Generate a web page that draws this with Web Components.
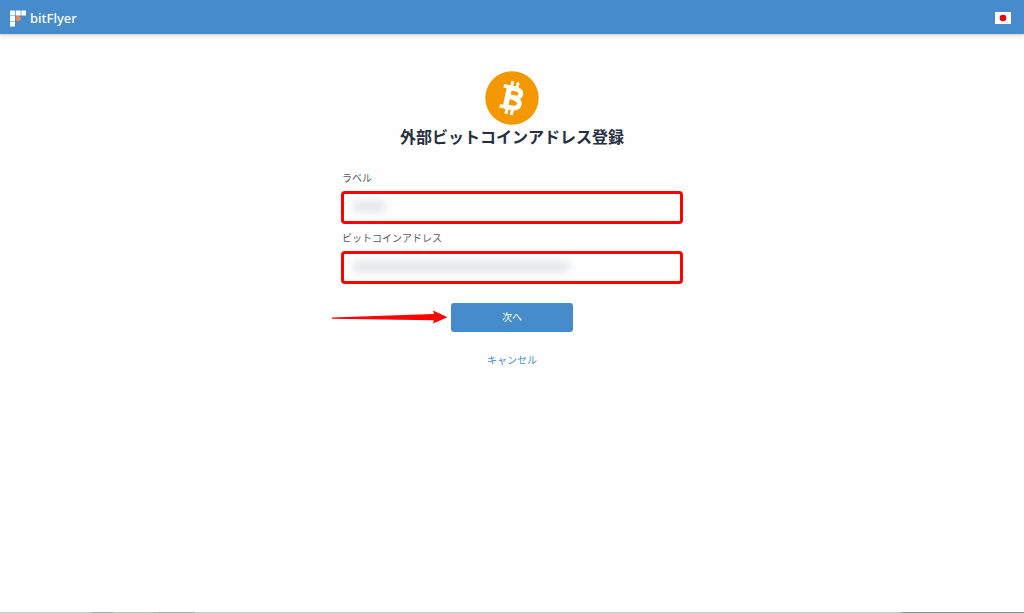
<!DOCTYPE html>
<html lang="ja">
<head>
<meta charset="utf-8">
<meta name="viewport" content="width=device-width, initial-scale=1">
<title>外部ビットコインアドレス登録</title>
<style>
body { margin: 0; background: #fefefe; color: #565a60; font: 10px/16px "Noto Sans CJK JP", sans-serif; }
</style>
</head>
<body>
<bf-page>
  <bf-header slot="header"></bf-header>
  <bf-register-form heading="外部ビットコインアドレス登録">
    <bf-field label="ラベル" mask="short"></bf-field>
    <bf-field label="ビットコインアドレス" mask="long"></bf-field>
    <bf-actions></bf-actions>
  </bf-register-form>
  <bf-window-edge slot="footer"></bf-window-edge>
</bf-page>
<script>
class Base extends HTMLElement {
  constructor() {
    super();
    this.attachShadow({ mode: "open" }).innerHTML = this.view();
  }
  view() { return ""; }
}

customElements.define("bf-page", class extends Base {
  view() { return `<style>
    :host { display: flex; flex-direction: column; min-height: 100vh; }
    main { flex: 1; padding: 37px 16px 16px; }
    </style><slot name="header"></slot><main><slot></slot></main><slot name="footer"></slot>`; }
});

customElements.define("bf-header", class extends Base {
  view() { return `<style>
    :host { display: block; }
    header { display: flex; align-items: center; justify-content: space-between; height: 34px; box-sizing: border-box;
      padding: 2px 13px 0 10px; background: #468ccb; box-shadow: 0 1px 4px rgba(0,0,0,.22); }
    a { display: flex; align-items: center; gap: 3px; color: #fff; text-decoration: none; font: 500 13px/20px "Noto Sans", sans-serif; }
    svg { display: block; }
    button { border: 0; padding: 0; background: none; }
    </style>
    <header>
      <a href="#"><svg width="17" height="17" viewBox="0 0 17 17" aria-hidden="true">
        <path fill="#fff" d="M0 .5h5v5H0zM5.7.5h5v5h-5zM11.4.5H16v5h-4.6zM0 6h5v5H0zM0 11.6h5v5H0z"/><circle cx="8.2" cy="8.5" r="2.6" fill="#f5873f"/></svg><span>bitFlyer</span></a>
      <button type="button" aria-label="日本語"><svg width="16" height="12" viewBox="0 0 16 12"><path fill="#fff" d="M0 0h16v12H0z"/><circle cx="8" cy="6" r="3.3" fill="#e60012"/></svg></button>
    </header>`; }
});

customElements.define("bf-bitcoin", class extends Base {
  view() { return `<style>:host, svg { display: block; }</style>
    <svg width="54" height="54" viewBox="0 0 54 54" aria-hidden="true">
      <circle cx="27" cy="27" r="26.7" fill="#f39800"/>
      <g transform="rotate(12 27 27)" fill="none" stroke="#fff">
        <path stroke-width="3" d="M24.300 10.500v6M29.800 10.500v6M24.300 38v5.800M29.800 38v5.800"/>
        <path stroke-width="3.600" d="M16.500 16.800H29M16.500 37.200H30"/>
        <path stroke-width="5.400" d="M22.400 16v22"/>
        <path stroke-width="4.800" d="M22 17.400h8c6.400 0 6.400 8.800 0 8.800H22M29 27c8.600 0 8.600 9.600 0 9.600H22"/>
      </g>
    </svg>`; }
});

customElements.define("bf-register-form", class extends Base {
  view() { return `<style>
    :host { display: block; max-width: 342px; margin: 0 auto; }
    form { display: flex; flex-direction: column; gap: 6px; }
    .top { display: flex; flex-direction: column; align-items: center; margin-bottom: 17px; }
    h1 { margin: 0; color: #27303f; font-size: 16px; line-height: 22px; font-weight: 700; white-space: nowrap; }
    </style><form><div class="top"><bf-bitcoin></bf-bitcoin><h1></h1></div><slot></slot></form>`; }
  connectedCallback() { this.shadowRoot.querySelector("h1").textContent = this.getAttribute("heading"); }
});

customElements.define("bf-field", class extends Base {
  view() { return `<style>
    :host { display: flex; flex-direction: column; gap: 5px; }
    label { padding-left: 1px; }
    .box { position: relative; }
    input { display: block; width: 100%; height: 33px; box-sizing: border-box; margin: 0; padding: 4px 8px;
      border: 3px solid #ff0000; border-radius: 4px; background: #fefefe; font: inherit; color: inherit; outline: 0; }
    .mask { position: absolute; left: 12px; top: 11px; width: 32px; height: 9px; border-radius: 4px;
      background: #dfe0e3; filter: blur(4px); pointer-events: none; }
    :host([mask="long"]) .mask { width: 216px; }
    </style><label for="value"></label><div class="box"><input id="value" type="text" autocomplete="off"><div class="mask"></div></div>`; }
  connectedCallback() { this.shadowRoot.querySelector("label").textContent = this.getAttribute("label"); }
});

customElements.define("bf-actions", class extends Base {
  view() { return `<style>
    :host { display: flex; flex-direction: column; align-items: center; gap: 20px; padding-top: 13px; }
    .row { position: relative; }
    button { display: block; width: 122px; height: 29px; padding: 0 0 2px; border: 0; border-radius: 3px; background: #468ccb; color: #fff; font: inherit; }
    .arrow { position: absolute; right: 100%; top: 7px; margin-right: 3px; }
    a { color: #468ccb; text-decoration: none; }
    </style>
    <div class="row">
      <svg class="arrow" width="117" height="14" viewBox="0 0 117 14" aria-hidden="true"><path fill="#ff0000" d="M1 7.600 103 4l-1-3.500L116.500 7.200 102 13.500l1-3.300L1 8.800z"/></svg>
      <button type="button">次へ</button>
    </div>
    <a href="#">キャンセル</a>`; }
});

customElements.define("bf-window-edge", class extends Base {
  view() { return `<style>
    :host { display: flex; height: 1px; background: #cacaca; }
    i { display: block; }
    .a { width: 9%; } .b { width: 2%; background: #a9a7a4; } .c { width: 4%; background: #c8beb8; }
    .d { width: 4%; background: #aaabad; } .e { margin-left: auto; width: 12%; background: #929292; }
    </style><i class="a"></i><i class="b"></i><i class="c"></i><i class="d"></i><i class="e"></i>`; }
});
</script>
</body>
</html>
